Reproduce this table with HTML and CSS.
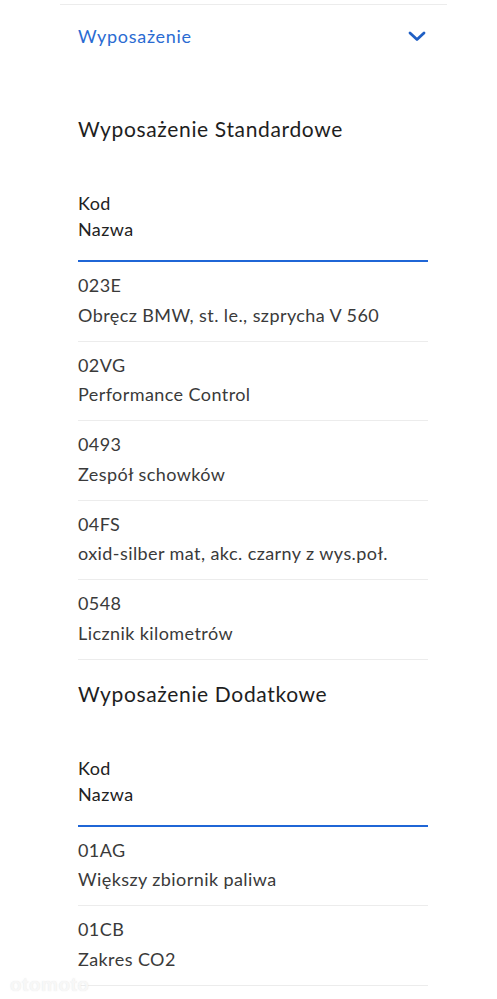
FILE: index.html
```html
<!DOCTYPE html>
<html lang="pl">
<head>
<meta charset="utf-8">
<link rel="stylesheet" href="styles.css">
<title>Wyposażenie</title>
</head>
<body>
<div class="panel">
  <div class="accordion-head">
    <span class="accordion-title">Wyposażenie</span>
    <svg class="chevron" width="18" height="11" viewBox="0 0 18 11"><path d="M2 2 L9 8.5 L16 2" fill="none" stroke="#1f5fc4" stroke-width="2.8" stroke-linecap="round" stroke-linejoin="round"/></svg>
  </div>
  <div class="content">
    <h2 class="section-title">Wyposażenie Standardowe</h2>
    <div class="table-head"><div>Kod</div><div>Nazwa</div></div>
    <div class="row"><div>023E</div><div>Obręcz BMW, st. le., szprycha V 560</div></div>
    <div class="row"><div>02VG</div><div>Performance Control</div></div>
    <div class="row"><div>0493</div><div>Zespół schowków</div></div>
    <div class="row"><div>04FS</div><div>oxid-silber mat, akc. czarny z wys.poł.</div></div>
    <div class="row"><div>0548</div><div>Licznik kilometrów</div></div>
    <h2 class="section-title second">Wyposażenie Dodatkowe</h2>
    <div class="table-head"><div>Kod</div><div>Nazwa</div></div>
    <div class="row"><div>01AG</div><div>Większy zbiornik paliwa</div></div>
    <div class="row"><div>01CB</div><div>Zakres CO2</div></div>
  </div>
</div>
<div class="watermark">otomoto</div>
</body>
</html>
```
FILE: styles.css
```css
html, body {
  margin: 0;
  padding: 0;
  background: #fff;
}
body {
  font-family: "Lato", "Open Sans", sans-serif;
  color: #2b2b2b;
  position: relative;
  min-height: 999px;
  overflow: hidden;
}
.panel {
  margin: 4px 50px 0 60px;
  border-top: 1px solid #ececec;
}
.accordion-head {
  height: 62px;
  display: flex;
  align-items: center;
  justify-content: space-between;
  padding: 0 21px 0 18px;
}
.accordion-title {
  color: #2a6bd2;
  font-size: 18px;
  letter-spacing: 0.7px;
}
.chevron {
  display: block;
  margin-top: 1px;
}
.content {
  padding: 47px 19px 0 18px;
}
.section-title {
  margin: 0;
  font-weight: 400;
  font-size: 21px;
  line-height: 30px;
  color: #1e1e1e;
  letter-spacing: 0.65px;
}
.section-title.second {
  margin-top: 19px;
}
.table-head {
  margin-top: 46px;
  padding-bottom: 18px;
  border-bottom: 2px solid #1f66d6;
  font-size: 18px;
  line-height: 26px;
  color: #222;
  letter-spacing: 0.4px;
}
.row {
  padding: 9px 0 10.5px;
  border-bottom: 1px solid #ececec;
  font-size: 18px;
  line-height: 29.5px;
  color: #3a3a3a;
  letter-spacing: 0.42px;
}
.watermark {
  position: absolute;
  left: 10px;
  top: 974px;
  font-family: "Liberation Sans", sans-serif;
  font-size: 19px;
  font-weight: 700;
  color: rgba(250,250,250,0.9);
  text-shadow: 0 0 1px rgba(200,200,200,0.5);
  letter-spacing: 0.5px;
}
```
